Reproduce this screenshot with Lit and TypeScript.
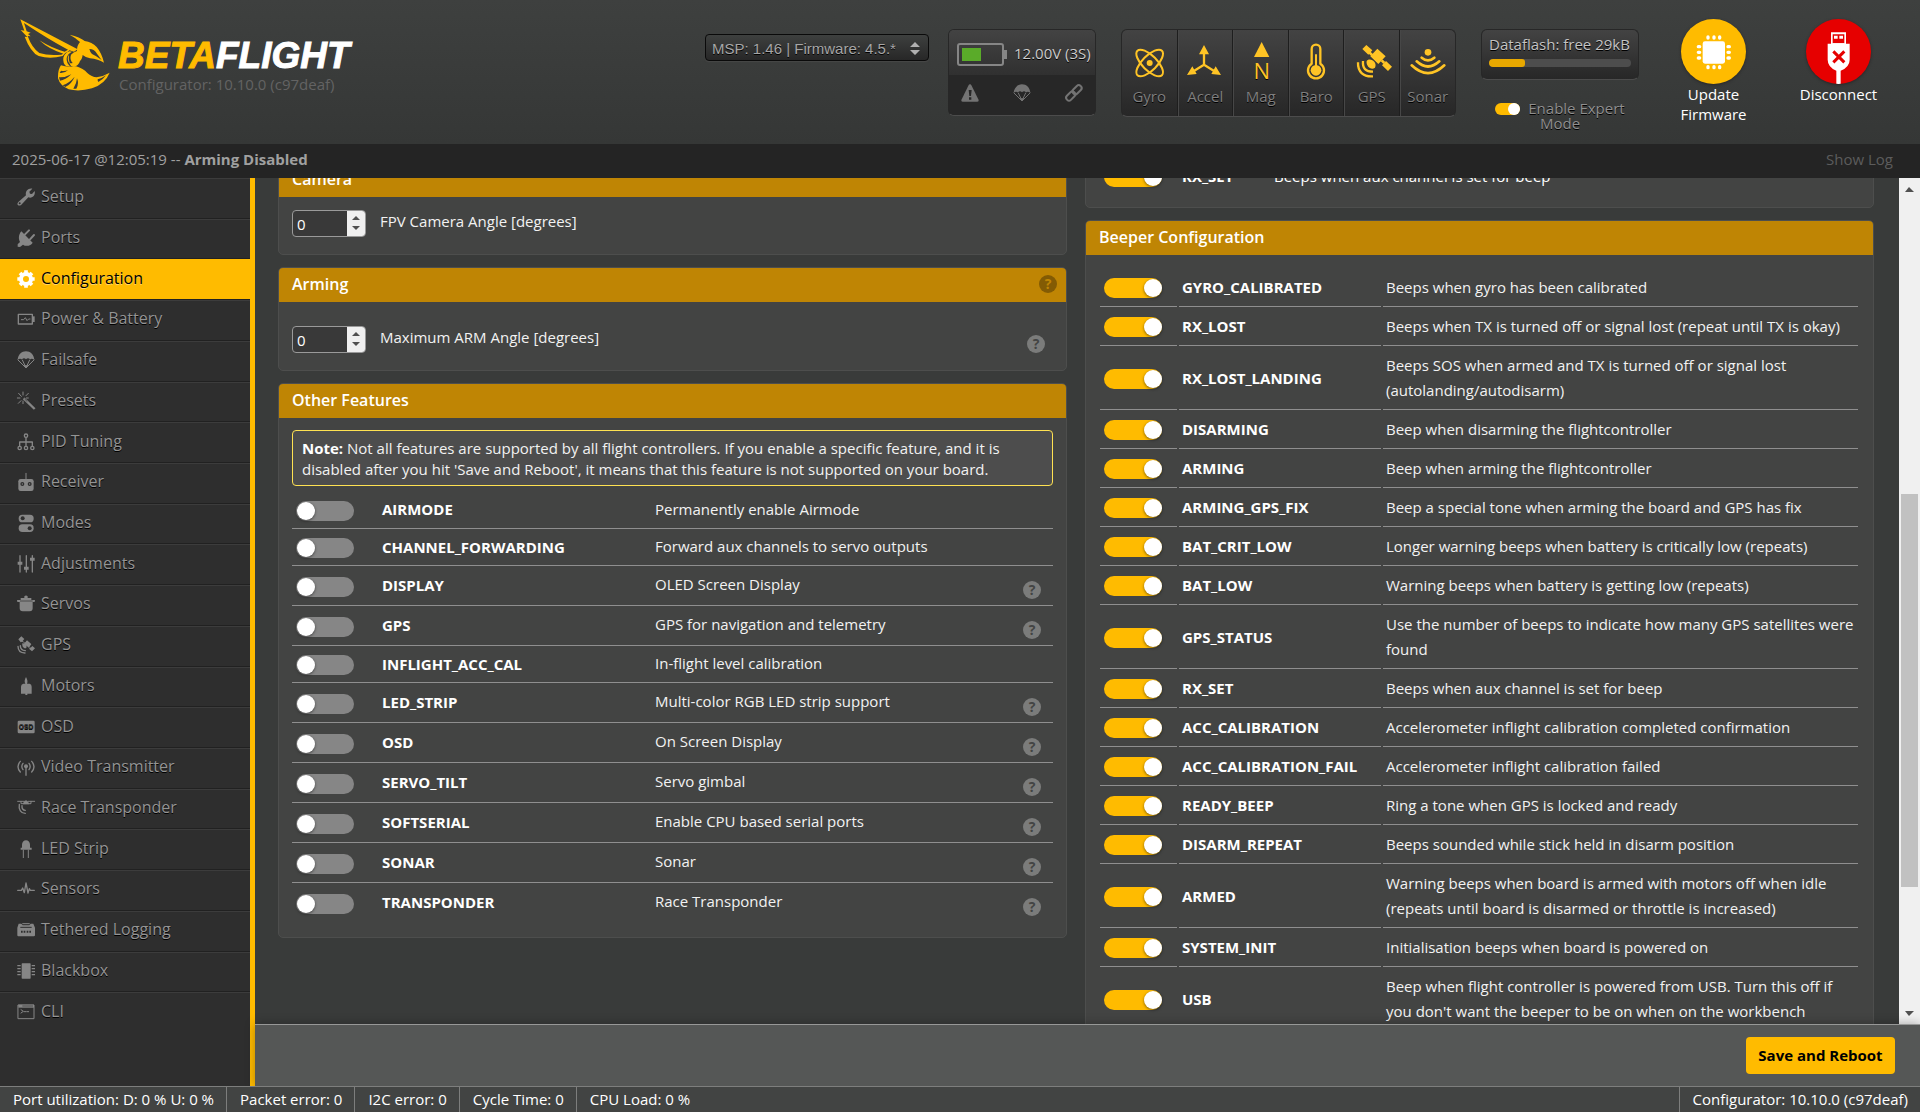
import { LitElement, html, css, svg, nothing, TemplateResult, SVGTemplateResult } from "lit";
import { customElement, state } from "lit/decorators.js";
import { classMap } from "lit/directives/class-map.js";
import { styleMap } from "lit/directives/style-map.js";

/* Every glyph is drawn on a 54 unit square. "hole" parts take the colour of the surface behind. */
const GLYPHS: Record<string, SVGTemplateResult> = {
  wrench: svg`<path class="f" d="M4 42 L27 22 C24 10 33 0 46 2 L37 11 L39 17 L45 18 L53 9 C56 22 46 32 34 28 L13 50 C6 57 -3 50 4 42Z"/><circle class="hole" cx="8" cy="46" r="3"/>`,
  plug: svg`<path class="f" d="M13 7 L47 41 C43 50 27 54 18 47 L9 54 L2 53 L2 46 L9 39 C3 28 6 14 13 7Z"/><path class="s" stroke-width="6" d="M24 16 L36 4 M39 31 L51 18"/>`,
  gear: svg`<circle class="s" cx="27" cy="27" r="15" stroke-width="12"/><path class="s butt" stroke-width="11" d="M27 9V1 M27 45v8 M9 27H1 M45 27h8 M14 14L9 9 M40 14l5-5 M14 40l-5 5 M40 40l5 5"/>`,
  battery: svg`<rect class="s" x="4" y="13" width="42" height="29" stroke-width="4"/><path class="f" d="M47 19h6v17h-6z"/><path class="s" stroke-width="3" d="M13 29h7l5-6 5 9 5-5h4"/>`,
  parachute: svg`<path class="f" d="M2 27 C3 11 14 1 27 1 S51 11 52 27 Q45 20 39 25 Q33 19 27 25 Q21 19 15 25 Q8 20 2 27Z"/><path class="s" stroke-width="3" d="M3 27 L27 51 L51 27 M16 27 L26 48 M38 27 L28 48"/><path class="f" d="M20 43h14l-7 9z"/>`,
  wand: svg`<path class="s butt" stroke-width="7" d="M20 19 L53 51"/><path class="hs" stroke-width="2" d="M23 21 L31 29"/><path class="s" stroke-width="3" d="M18 0v9 M1 18h8 M5 4l8 9 M34 4l-7 7 M4 34l8-8 M18 27v8 M28 18h6"/>`,
  tree: svg`<circle class="s" cx="27" cy="8" r="5" stroke-width="4"/><circle class="s" cx="8" cy="45" r="5" stroke-width="4"/><circle class="s" cx="27" cy="45" r="5" stroke-width="4"/><circle class="s" cx="46" cy="45" r="5" stroke-width="4"/><path class="s" stroke-width="4" d="M27 14v24 M8 39V27h38v12"/>`,
  remote: svg`<rect class="f" x="4" y="18" width="46" height="36" rx="7"/><path class="s" stroke-width="3" d="M27 1v18"/><circle class="hs" cx="16" cy="33" r="4" stroke-width="4"/><circle class="hs" cx="38" cy="33" r="4" stroke-width="4"/>`,
  modes: svg`<rect class="f" x="5" y="2" width="45" height="23" rx="11"/><rect class="f" x="5" y="31" width="45" height="23" rx="11"/><circle class="hole" cx="17" cy="13" r="6"/><circle class="hole" cx="38" cy="43" r="6"/>`,
  sliders: svg`<path class="s" stroke-width="4" d="M9 2v49 M28 2v49 M46 2v49"/><path class="f" d="M2 20h14v9H2z M21 35h14v9H21z M39 8h14v9H39z"/>`,
  servo: svg`<path class="f" d="M22 4q5-5 10 0v5h11v6h11l-1 6h-6v19q0 9-9 9H17q-9 0-9-9V21H1l-1-6h11V9h11z"/><path class="hs" stroke-width="2" d="M9 18h38"/>`,
  satellite: svg`<path class="f" d="M13 1 L22 9 L17 15 L24 20 L30 13 L42 24 L36 31 L41 35 L46 30 L54 37 L45 46 L36 38 L39 35 L34 31 L27 27 L19 19 L15 17 L11 19 L4 10Z M16 22 C24 20 33 30 27 37 C18 38 15 30 16 22Z"/><path class="f" d="M30 14 L43 25 L35 35 L22 23Z"/><path class="s" stroke-width="4" d="M10 29 C10 38 15 43 25 44 M3 31 C3 44 11 51 24 51"/>`,
  motor: svg`<path class="f" d="M27 0 Q34 12 30 20 H38 Q44 22 44 29 V50 H31 V54 H25 V50 H12 V29 Q12 21 19 20 H25 Q20 12 27 0Z"/>`,
  osd: svg`<rect class="f" x="2" y="8" width="51" height="38" rx="4"/><text class="hole osd" x="27" y="34" text-anchor="middle">OSD</text>`,
  antenna: svg`<circle class="f" cx="27" cy="25" r="6"/><path class="s" stroke-width="4" d="M27 25v27 M18 16q-7 9 0 19 M36 16q7 9 0 19 M10 10q-14 16 0 32 M44 10q14 16 0 32"/>`,
  drone: svg`<path class="s" stroke-width="3" d="M2 7h20 M34 7h19 M12 7v7h30V7"/><path class="f" d="M20 9q7-10 14 0l3 7H17z"/><path class="s" stroke-width="4" d="M7 16 C4 32 12 43 25 43 M15 20 C14 28 18 34 25 34"/>`,
  led: svg`<path class="f" d="M15 23V14a12 13 0 0 1 24 0v9h5v6H11v-6z"/><path class="s butt" stroke-width="3" d="M19 29v25 M34 29v25"/>`,
  pulse: svg`<path class="s" stroke-width="4" d="M2 31h11l4-7 5 14 5-29 6 30 4-13 3 5h12"/>`,
  logger: svg`<path class="f" d="M5 8 H13 L17 13 H37 L41 8 H49 L54 20 V43 Q54 46 50 46 H4 Q1 46 1 43 V20Z"/><path class="hs" stroke-width="3" d="M10 19h34"/><path class="hs butt" stroke-width="6" d="M12 32h5 M20 32h5 M29 32h5 M37 32h5"/><path class="s" stroke-width="3" d="M17 8h20"/>`,
  chip: svg`<rect class="f" x="14" y="4" width="27" height="46" rx="2"/><path class="s butt" stroke-width="4" d="M1 11h10 M1 20h10 M1 29h10 M1 38h10 M44 11h10 M44 20h10 M44 29h10 M44 38h10"/>`,
  terminal: svg`<rect class="s" x="4" y="6" width="47" height="41" stroke-width="3"/><path class="f" d="M4 5h47v9H4z"/><path class="hs" stroke-width="2" d="M16 9h32"/><path class="s" stroke-width="3" d="M12 20l7 5-7 5 M21 26h5 M29 26h6"/>`,
  warning: svg`<path class="f" d="M27 1 Q30 1 32 5 L53 48 Q54 53 49 53 H5 Q0 53 1 48 L22 5 Q24 1 27 1Z"/><path class="hole" d="M23 18h9l-2 18h-5z M24 40h7v7h-7z"/>`,
  link: svg`<g transform="rotate(-45 27 27)"><rect class="s" x="-2" y="18" width="31" height="17" rx="8" stroke-width="6"/><rect class="s" x="25" y="18" width="31" height="17" rx="8" stroke-width="6"/></g>`,
};

/* Sensor drawings use a 108 unit square. */
const SENSOR_GLYPHS: Record<string, SVGTemplateResult> = {
  Gyro: svg`<g transform="translate(56 60)"><ellipse class="s" rx="52" ry="22" stroke-width="6" transform="rotate(45)"/><ellipse class="s" rx="52" ry="22" stroke-width="6" transform="rotate(-45)"/><circle class="f" r="9"/></g>`,
  Accel: svg`<path class="s butt" stroke-width="7" d="M51 24v41 L17 86 M51 65 L85 86"/><path class="f" d="M51 6l15 28H36z M0 96l16-26 13 23z M102 96L86 70 73 93z"/>`,
  Mag: svg`<path class="f" d="M56 -3l23 45H33z"/><text class="f north" x="56" y="108" text-anchor="middle">N</text>`,
  Baro: svg`<path class="s" stroke-width="7" d="M41 62V18a13 13 0 0 1 26 0v44a24 24 0 1 1-26 0z"/><path class="s" stroke-width="6" d="M54 36v40"/><circle class="f" cx="54" cy="82" r="16"/>`,
  GPS: svg`<path class="f" d="M25 18 L37 6 L55 22 L43 35Z M84 67 L96 54 L114 71 L102 84Z M70 17 L95 40 L73 63 L49 40Z"/><path class="f" d="M38 54 C49 42 71 58 63 74 C51 84 35 68 38 54Z"/><path class="s butt" stroke-width="7" d="M27 54 C25 76 35 86 57 86 M12 58 C11 86 27 102 57 100"/><path class="s butt" stroke-width="8" d="M43 25l20 20 M83 52l8 8"/>`,
  Sonar: svg`<circle class="f" cx="54" cy="28" r="10"/><path class="s" stroke-width="8" d="M35 44q19 16 38 0 M20 55q34 31 68 0 M5 67q49 47 98 0"/>`,
};

const TABS: [string, string][] = [
  ["Setup", "wrench"], ["Ports", "plug"], ["Configuration", "gear"], ["Power & Battery", "battery"],
  ["Failsafe", "parachute"], ["Presets", "wand"], ["PID Tuning", "tree"], ["Receiver", "remote"],
  ["Modes", "modes"], ["Adjustments", "sliders"], ["Servos", "servo"], ["GPS", "satellite"],
  ["Motors", "motor"], ["OSD", "osd"], ["Video Transmitter", "antenna"], ["Race Transponder", "drone"],
  ["LED Strip", "led"], ["Sensors", "pulse"], ["Tethered Logging", "logger"], ["Blackbox", "chip"],
  ["CLI", "terminal"],
];

const FEATURES: [string, string, boolean][] = [
  ["AIRMODE", "Permanently enable Airmode", false],
  ["CHANNEL_FORWARDING", "Forward aux channels to servo outputs", false],
  ["DISPLAY", "OLED Screen Display", true],
  ["GPS", "GPS for navigation and telemetry", true],
  ["INFLIGHT_ACC_CAL", "In-flight level calibration", false],
  ["LED_STRIP", "Multi-color RGB LED strip support", true],
  ["OSD", "On Screen Display", true],
  ["SERVO_TILT", "Servo gimbal", true],
  ["SOFTSERIAL", "Enable CPU based serial ports", true],
  ["SONAR", "Sonar", true],
  ["TRANSPONDER", "Race Transponder", true],
];

const BEEPERS: [string, string][] = [
  ["GYRO_CALIBRATED", "Beeps when gyro has been calibrated"],
  ["RX_LOST", "Beeps when TX is turned off or signal lost (repeat until TX is okay)"],
  ["RX_LOST_LANDING", "Beeps SOS when armed and TX is turned off or signal lost (autolanding/autodisarm)"],
  ["DISARMING", "Beep when disarming the flightcontroller"],
  ["ARMING", "Beep when arming the flightcontroller"],
  ["ARMING_GPS_FIX", "Beep a special tone when arming the board and GPS has fix"],
  ["BAT_CRIT_LOW", "Longer warning beeps when battery is critically low (repeats)"],
  ["BAT_LOW", "Warning beeps when battery is getting low (repeats)"],
  ["GPS_STATUS", "Use the number of beeps to indicate how many GPS satellites were found"],
  ["RX_SET", "Beeps when aux channel is set for beep"],
  ["ACC_CALIBRATION", "Accelerometer inflight calibration completed confirmation"],
  ["ACC_CALIBRATION_FAIL", "Accelerometer inflight calibration failed"],
  ["READY_BEEP", "Ring a tone when GPS is locked and ready"],
  ["DISARM_REPEAT", "Beeps sounded while stick held in disarm position"],
  ["ARMED", "Warning beeps when board is armed with motors off when idle (repeats until board is disarmed or throttle is increased)"],
  ["SYSTEM_INIT", "Initialisation beeps when board is powered on"],
  ["USB", "Beep when flight controller is powered from USB. Turn this off if you don't want the beeper to be on when on the workbench"],
];

const glyph = (name: string): TemplateResult =>
  html`<svg class="glyph" viewBox="0 0 54 54" aria-hidden="true">${GLYPHS[name]}</svg>`;

@customElement("app-root")
export class AppRoot extends LitElement {
  @state() private tab = "Configuration";

  static styles = css`
    * { box-sizing: border-box; }
    :host {
      display: flex;
      flex-direction: column;
      height: 100vh;
      overflow: hidden;
      background: #393b3a;
      color: #fff;
      font: 15px/20px "Open Sans", "Liberation Sans", sans-serif;
      --accent: #ffbb00;
      --hole: #2e2e2e;
    }
    button, input, select { font: inherit; color: inherit; margin: 0; }
    button { border: 0; padding: 0; background: none; cursor: pointer; }

    .f { fill: currentColor; }
    .s { fill: none; stroke: currentColor; stroke-linecap: round; stroke-linejoin: round; }
    .hole { fill: var(--hole); }
    .hs { fill: none; stroke: var(--hole); }
    .butt { stroke-linecap: butt; }
    .osd { font: bold 20px "Liberation Sans", sans-serif; }
    .north { font: 66px "Open Sans", sans-serif; }
    .glyph { width: 18px; height: 18px; flex: none; overflow: visible; display: block; }

    /* header */
    .header {
      display: flex;
      align-items: flex-start;
      flex: none;
      height: 144px;
      padding-right: 19px;
      background: linear-gradient(#3e403f, #353736);
    }
    .logo { display: flex; margin: 19px auto 0 20px; }
    .wasp { width: 90px; height: 72px; color: var(--accent); --hole: #3a3c3b; }
    .brand { padding: 19px 0 0 8px; }
    .wordmark {
      font: italic bold 37px/36px "Liberation Sans", sans-serif;
      color: #fff;
      -webkit-text-stroke: 1px currentColor;
    }
    .wordmark b { color: var(--accent); }
    .version { padding-left: 1px; color: #636363; line-height: 20px; }
    .firmware-select {
      appearance: none;
      width: 224px;
      height: 27px;
      margin: 34px 19px 0 0;
      padding: 2px 6px 0;
      border: 1px solid #0a0a0a;
      border-radius: 4px;
      background: linear-gradient(#3e403f, #272727);
      box-shadow: 0 1px 1px #484848;
      color: #a6a6a6;
      font: 15px/20px "Liberation Sans", sans-serif;
      text-shadow: 0 1px #000;
    }
    .select-wrap { display: grid; align-items: start; }
    .select-wrap > * { grid-area: 1 / 1; }
    .select-arrows { justify-self: end; width: 10px; height: 14px; margin: 42px 28px 0 0; color: #b0b0b0; pointer-events: none; }
    .panel {
      margin-top: 29px;
      border: 1px solid #272727;
      border-bottom-color: #4c4c4c;
      border-radius: 6px;
      background: linear-gradient(#434343, #272727);
      text-shadow: 0 1px #000;
      overflow: hidden;
    }
    .power { width: 148px; height: 87px; margin-right: 25px; display: flex; flex-direction: column; }
    .volts { flex: 1; display: flex; align-items: center; gap: 7px; padding: 3px 0 0 8px; background: linear-gradient(#434343, #303030); color: #ccc; }
    .voltage { padding-bottom: 3px; }
    .cell { width: 50px; height: 23px; flex: none; color: #868686; }
    .flags { height: 40px; display: flex; justify-content: space-between; align-items: flex-start; padding: 9px 12px 0; background: #272727; color: #737373; --hole: #272727; }
    .sensors { width: 335px; height: 88px; margin-right: 25px; display: grid; grid-template-columns: repeat(6, 1fr); }
    .sensor { display: flex; flex-direction: column; align-items: center; padding-top: 13px; border-right: 1px solid #1e1e1e; border-left: 1px solid #474747; color: #7f7f7f; }
    .sensor:first-child { border-left: 0; }
    .sensor:last-child { border-right: 0; }
    .sensor-glyph { width: 36px; height: 36px; margin-bottom: 7px; color: #ffc425; overflow: visible; }
    .storage { width: 158px; margin-right: 12px; text-align: center; }
    .flash { height: 51px; padding: 4px 7px 0; color: #c4c4c4; text-align: left; white-space: nowrap; }
    .meter { height: 8px; margin-top: 5px; border-radius: 4px; background: #4d4d4d; overflow: hidden; }
    .meter-fill { height: 100%; border-radius: 3px; background: #e8a800; }
    .expert { padding-top: 21px; color: #8f8f8f; line-height: 15px; text-shadow: 0 1px #000; }
    .round { width: 125px; display: flex; flex-direction: column; align-items: center; margin-top: 19px; color: #fff; }
    .disc { width: 65px; height: 65px; border-radius: 50%; background: var(--accent); overflow: hidden; box-shadow: 0 1px 3px #282828; }
    .disc.stop { background: #e60000; --hole: #e60000; }
    .caption { max-width: 90px; }

    /* log */
    .log { display: flex; justify-content: space-between; align-items: center; flex: none; height: 34px; padding: 0 27px 5px 12px; background: #242424; color: #a0a0a0; }
    .show-log { color: #5c5c5c; }

    /* body */
    .body { display: flex; flex: 1; min-height: 0; }
    .sidebar { width: 255px; flex: none; border-right: 5px solid var(--accent); background: #2e2e2e; display: flex; }
    .tabs { flex: 1; display: grid; grid-auto-rows: 1fr; margin: 0; padding: 0 0 53px; list-style: none; }
    .tab { border-top: 1px solid #3c3c3c; border-bottom: 1px solid #212121; display: flex; }
    .tab:last-child { border-bottom: 0; }
    .tab-link { flex: 1; display: flex; align-items: center; gap: 6px; padding: 0 0 2px 17px; color: #949494; font-size: 16px; text-decoration: none; text-shadow: 0 1px #000; }
    .tab-name { padding-bottom: 2px; }
    .tab .glyph { color: #868686; }
    .tab.active { background: var(--accent); border-top-color: var(--accent); --hole: var(--accent); }
    .tab.active .tab-link { color: #000; text-shadow: 0 1px #ffd766; }
    .tab.active .glyph { color: #fff; }

    .main { flex: 1; min-width: 0; display: flex; flex-direction: column; }
    .view { flex: 1; min-height: 0; display: flex; }
    .content { flex: 1; overflow: hidden; display: grid; grid-template-columns: 1fr 1fr; gap: 18px; padding: 0 25px 0 23px; }
    .column { display: flex; flex-direction: column; gap: 12px; margin-top: -16px; }
    .card { flex: none; border: 1px solid #4d4e4d; border-radius: 5px; background: #434443; overflow: hidden; --hole: #434443; }
    .card-head { display: flex; align-items: center; justify-content: space-between; height: 34px; margin: 0; padding: 0 9px 2px 13px; background: #bf8504; font-size: 16px; font-weight: 600; line-height: 20px; --hole: #bf8504; }

    .help { width: 18px; height: 18px; border-radius: 50%; background: #7b7c7b; color: var(--hole); font: bold 14px/18px "Open Sans", sans-serif; text-align: center; display: block; }
    .card-head .help { background: #835b04; }

    .field { display: flex; align-items: flex-start; padding: 13px 21px 0 13px; gap: 14px; }
    .field.short { height: 57px; }
    .field.tall { height: 68px; padding-top: 24px; }
    .field label { padding-top: 1px; color: #f2f2f2; }
    .field .help { margin: 9px 0 0 auto; }
    .stepper { display: flex; width: 74px; height: 27px; border: 1px solid #9a9a9a; border-radius: 4px; background: #393939; overflow: hidden; }
    .number { appearance: textfield; width: 54px; padding: 0 0 0 4px; border: 0; background: none; outline: 0; }
    .number::-webkit-inner-spin-button { appearance: none; }
    .spin { flex: 1; display: block; width: 18px; background: #f0f0f0; color: #505050; }

    .toggle {
      appearance: none;
      display: block;
      width: 58px;
      height: 20px;
      margin: 0;
      border-radius: 20px;
      background: #868686;
      --knob: 18px;
    }
    .toggle::before { content: ""; display: block; width: var(--knob); height: var(--knob); margin: 1px; border-radius: 50%; background: #fff; box-shadow: 0 1px 3px rgba(0, 0, 0, 0.5); }
    .toggle:checked { background: var(--accent); }
    .toggle:checked::before { margin-left: auto; margin-right: 0; }
    .toggle.mini { display: inline-block; width: 25px; height: 12px; margin-right: 8px; vertical-align: -1px; --knob: 12px; }
    .toggle.mini::before { margin-top: 0; margin-bottom: 0; box-shadow: none; }

    .note { margin: 12px 13px 5px; padding: 7px 9px 5px; border: 1px solid #ffe252; border-radius: 4px; background: #4d4d4d; line-height: 21px; color: #f2f2f2; }
    .note b { color: #fff; }

    .features { width: calc(100% - 26px); margin: 0 13px 15px; border-collapse: collapse; table-layout: fixed; }
    .features tr { height: 37px; border-bottom: 1px solid #8f8f8f; }
    .features tr.helped { height: 40px; }
    .features tr:last-child { border-bottom: 0; }
    .features th, .features td { padding: 0; text-align: left; vertical-align: middle; }
    .features .c-toggle { width: 90px; padding: 3px 0 0 4px; }
    .features .c-name { width: 273px; }
    .helped .c-name { padding-bottom: 1px; }
    .features .c-text { padding-bottom: 1px; }
    .features .helped .c-text { padding-bottom: 3px; }
    .features .c-help { width: 30px; vertical-align: bottom; padding-bottom: 6px; }

    th { font-weight: 700; white-space: nowrap; }
    td { color: #f2f2f2; }
    .beeper-body { padding: 13px 13px 15px 12px; }
    .beepers { width: 100%; border-spacing: 2px; table-layout: fixed; line-height: 25px; }
    .beepers th, .beepers td { padding: 5px 0 6px 3px; border-bottom: 1px solid #8f8f8f; text-align: left; vertical-align: middle; }
    .beepers .b-toggle { width: 77px; padding: 0 4px; }
    .beepers .b-name { width: 202px; }
    .beacon { display: flex; align-items: center; height: 46px; padding: 0 18px 19px; }
    .beacon .toggle { margin: 3px 20px 0 0; }
    .beacon-name { width: 92px; font-weight: 700; }

    .scrollbar { width: 21px; flex: none; display: flex; flex-direction: column; background: #f0f0f0; color: #505050; }
    .arrow { width: 21px; height: 21px; flex: none; }
    .track { flex: 1; display: grid; grid-template-rows: 295fr 393fr 116fr; padding: 0 2px; }
    .thumb { grid-row: 2; background: #c1c1c1; }

    .toolbar { display: flex; justify-content: flex-end; align-items: center; flex: none; height: 62px; padding-right: 25px; border-top: 1px solid #979897; background: #555756; box-shadow: 0 0 10px rgba(0, 0, 0, 0.3); }
    .save { width: 149px; height: 37px; padding-bottom: 2px; border-radius: 4px; background: var(--accent); color: #000; font-weight: 700; }

    .status { display: flex; flex: none; height: 26px; border-top: 1px solid #7d7e7d; background: #424443; line-height: 25px; }
    .stat { padding: 0 12px 0 13px; border-right: 1px solid #7d7e7d; white-space: nowrap; }
    .stat.last { border-right: 0; }
    .stat.build { margin-left: auto; border-right: 0; border-left: 1px solid #7d7e7d; }
  `;

  private header() {
    return html`
      <header class="header">
        <div class="logo">
          <svg class="wasp" viewBox="60 58 270 216" role="img" aria-label="Betaflight">
            <path class="f" fill-rule="evenodd" d="M61 59 L233 149 L222 156 L208 152 Q203 158 196 160 L188 169 Q150 179 116 169 Q92 158 74 111 L82 112 L62 91 L73 93Z M72 70 L80 95 L92 99 L84 103 L92 110 L83 109 Q96 145 118 160 Q145 169 184 165 L190 162 Q148 150 118 122 Q156 146 194 156 L204 150 Q150 122 72 70Z"/>
            <path class="f" d="M209 105 Q240 112 254 124 Q276 127 290 142 Q305 160 312 189 Q294 178 270 176 Q256 173 248 166 Q246 180 240 184 Q236 198 222 202 Q210 201 209 190 Q214 192 218 190 Q208 180 213 165 Q220 158 231 154 Q230 138 240 127 Q228 115 209 105Z"/>
            <path class="hole" d="M268 148 Q283 149 289 159 Q293 165 305 181 Q288 168 276 163 Q270 157 268 148Z"/>
            <path class="f" d="M208 155 Q194 160 190 174 Q188 190 198 199 L212 201 Q198 190 200 175 Q203 162 216 156Z"/>
            <path class="f" d="M207 165 Q198 178 210 194 Q204 178 207 165Z"/>
            <path class="f" d="M183 197 Q200 204 228 200 Q250 206 262 220 Q275 232 290 233 Q310 230 329 219 Q316 252 276 266 Q238 277 206 269 Q180 258 174 236 Q173 210 183 197Z"/>
            <path class="hole" d="M177 233 Q196 234 214 224 Q196 242 180 243Z M188 257 Q208 250 224 231 Q214 254 196 262Z M220 267 Q230 252 231 236 Q238 252 229 267Z M183 213 Q192 216 204 212 Q192 222 179 220Z M293 239 Q306 236 318 227 Q309 240 295 247 Q292 243 293 239Z"/>
          </svg>
          <div class="brand">
            <div class="wordmark"><b>BETA</b>FLIGHT</div>
            <div class="version">Configurator: 10.10.0 (c97deaf)</div>
          </div>
        </div>

        <div class="select-wrap">
          <select class="firmware-select" aria-label="Virtual firmware version">
            <option>MSP: 1.46 | Firmware: 4.5.*</option>
          </select>
          <svg class="select-arrows" viewBox="0 0 10 14" aria-hidden="true"><path class="f" d="M5 0l5 5H0z M5 13l5-5H0z"/></svg>
        </div>

        <div class="panel power">
          <div class="volts">
            <svg class="cell" viewBox="0 0 50 23" aria-hidden="true">
              <rect class="s" x="1" y="1" width="45" height="21" rx="2" stroke-width="2"/>
              <path class="f" d="M47 7h3v9h-3z"/>
              <path fill="#5aab29" d="M5 5h19v13H5z"/>
            </svg>
            <span class="voltage">12.00V (3S)</span>
          </div>
          <div class="flags">${glyph("warning")}${glyph("parachute")}${glyph("link")}</div>
        </div>

        <div class="panel sensors">
          ${Object.keys(SENSOR_GLYPHS).map((name) => html`
            <div class="sensor">
              <svg class="sensor-glyph" viewBox="0 0 108 108" aria-hidden="true">${SENSOR_GLYPHS[name]}</svg>
              <span>${name}</span>
            </div>`)}
        </div>

        <div class="storage">
          <div class="panel flash">
            Dataflash: free 29kB
            <div class="meter"><div class="meter-fill" style=${styleMap({ width: "25%" })}></div></div>
          </div>
          <div class="expert">
            <input class="toggle mini" type="checkbox" id="expert" checked><label for="expert">Enable Expert Mode</label>
          </div>
        </div>

        <button class="round">
          <svg class="disc" viewBox="0 0 195 195" aria-hidden="true">
            <rect class="f" x="65" y="67" width="67" height="67" rx="7"/>
            <path class="s" stroke-width="10" d="M81 54v3 M99 54v3 M116 54v3 M81 143v3 M99 143v3 M116 143v3 M52 83h4 M52 100h4 M52 117h4 M141 83h4 M141 100h4 M141 117h4"/>
          </svg>
          <span class="caption">Update Firmware</span>
        </button>
        <button class="round">
          <svg class="disc stop" viewBox="0 0 195 195" aria-hidden="true">
            <path class="f" d="M75 40h45v34h11v48q0 22-27 33v40H91v-40q-26-11-26-33V74h10z"/>
            <path class="hole" d="M80 46h35v27H80z"/>
            <path class="f" d="M84 50h11v9H84z M100 50h11v9h-11z M80 73h35v3H80z"/>
            <path class="hs" stroke-width="9" d="M82 97l33 33 M115 97l-33 33"/>
          </svg>
          <span class="caption">Disconnect</span>
        </button>
      </header>`;
  }

  private numberCard(title: string, label: string, id: string, helped: boolean) {
    return html`
      <section class="card">
        <h2 class="card-head">${title}${helped ? html`<button class="help" aria-label="Help">?</button>` : nothing}</h2>
        <div class=${classMap({ field: true, tall: helped, short: !helped })}>
          <span class="stepper">
            <input class="number" type="number" id=${id} value="0">
            <svg class="spin" viewBox="0 0 18 25" aria-hidden="true"><path class="f" d="M9 5l4 4H5z M9 19l4-4H5z"/></svg>
          </span>
          <label for=${id}>${label}</label>
          ${helped ? html`<button class="help" aria-label="Help">?</button>` : nothing}
        </div>
      </section>`;
  }

  render() {
    return html`
      ${this.header()}
      <div class="log">
        <span>2025-06-17 @12:05:19 -- <b>Arming Disabled</b></span>
        <button class="show-log">Show Log</button>
      </div>
      <div class="body">
        <nav class="sidebar">
          <ul class="tabs">
            ${TABS.map(([name, icon]) => html`
              <li class=${classMap({ tab: true, active: name === this.tab })}>
                <a class="tab-link" href="#" @click=${(e: Event) => { e.preventDefault(); this.tab = name; }}>${glyph(icon)}<span class="tab-name">${name}</span></a>
              </li>`)}
          </ul>
        </nav>
        <main class="main">
          <div class="view">
            <div class="content">
              <div class="column">
                ${this.numberCard("Camera", "FPV Camera Angle [degrees]", "camera-angle", false)}
                ${this.numberCard("Arming", "Maximum ARM Angle [degrees]", "arm-angle", true)}
                <section class="card">
                  <h2 class="card-head">Other Features</h2>
                  <p class="note"><b>Note:</b> Not all features are supported by all flight controllers. If you enable a specific feature, and it is disabled after you hit 'Save and Reboot', it means that this feature is not supported on your board.</p>
                  <table class="features">
                    ${FEATURES.map(([name, text, helped]) => html`
                      <tr class=${classMap({ helped })}>
                        <td class="c-toggle"><input class="toggle" type="checkbox" id="feature-${name}"></td>
                        <th class="c-name" scope="row"><label for="feature-${name}">${name}</label></th>
                        <td class="c-text">${text}</td>
                        <td class="c-help">${helped ? html`<button class="help" aria-label="Help">?</button>` : nothing}</td>
                      </tr>`)}
                  </table>
                </section>
              </div>
              <div class="column">
                <section class="card beacon">
                  <input class="toggle" type="checkbox" id="beacon-RX_SET" checked>
                  <label class="beacon-name" for="beacon-RX_SET">RX_SET</label>
                  <span>Beeps when aux channel is set for beep</span>
                </section>
                <section class="card">
                  <h2 class="card-head">Beeper Configuration</h2>
                  <div class="beeper-body">
                    <table class="beepers">
                      ${BEEPERS.map(([name, text]) => html`
                        <tr>
                          <td class="b-toggle"><input class="toggle" type="checkbox" id="beeper-${name}" checked></td>
                          <th class="b-name" scope="row"><label for="beeper-${name}">${name}</label></th>
                          <td>${text}</td>
                        </tr>`)}
                    </table>
                  </div>
                </section>
              </div>
            </div>
            <div class="scrollbar" aria-hidden="true">
              <svg class="arrow" viewBox="0 0 21 21"><path class="f" d="M10 9l5 5H6z"/></svg>
              <div class="track"><div class="thumb"></div></div>
              <svg class="arrow" viewBox="0 0 21 21"><path class="f" d="M10 13l5-5H6z"/></svg>
            </div>
          </div>
          <div class="toolbar"><button class="save">Save and Reboot</button></div>
        </main>
      </div>
      <footer class="status">
        <span class="stat">Port utilization: D: 0 % U: 0 %</span>
        <span class="stat">Packet error: 0</span>
        <span class="stat">I2C error: 0</span>
        <span class="stat">Cycle Time: 0</span>
        <span class="stat last">CPU Load: 0 %</span>
        <span class="stat build">Configurator: 10.10.0 (c97deaf)</span>
      </footer>`;
  }
}
